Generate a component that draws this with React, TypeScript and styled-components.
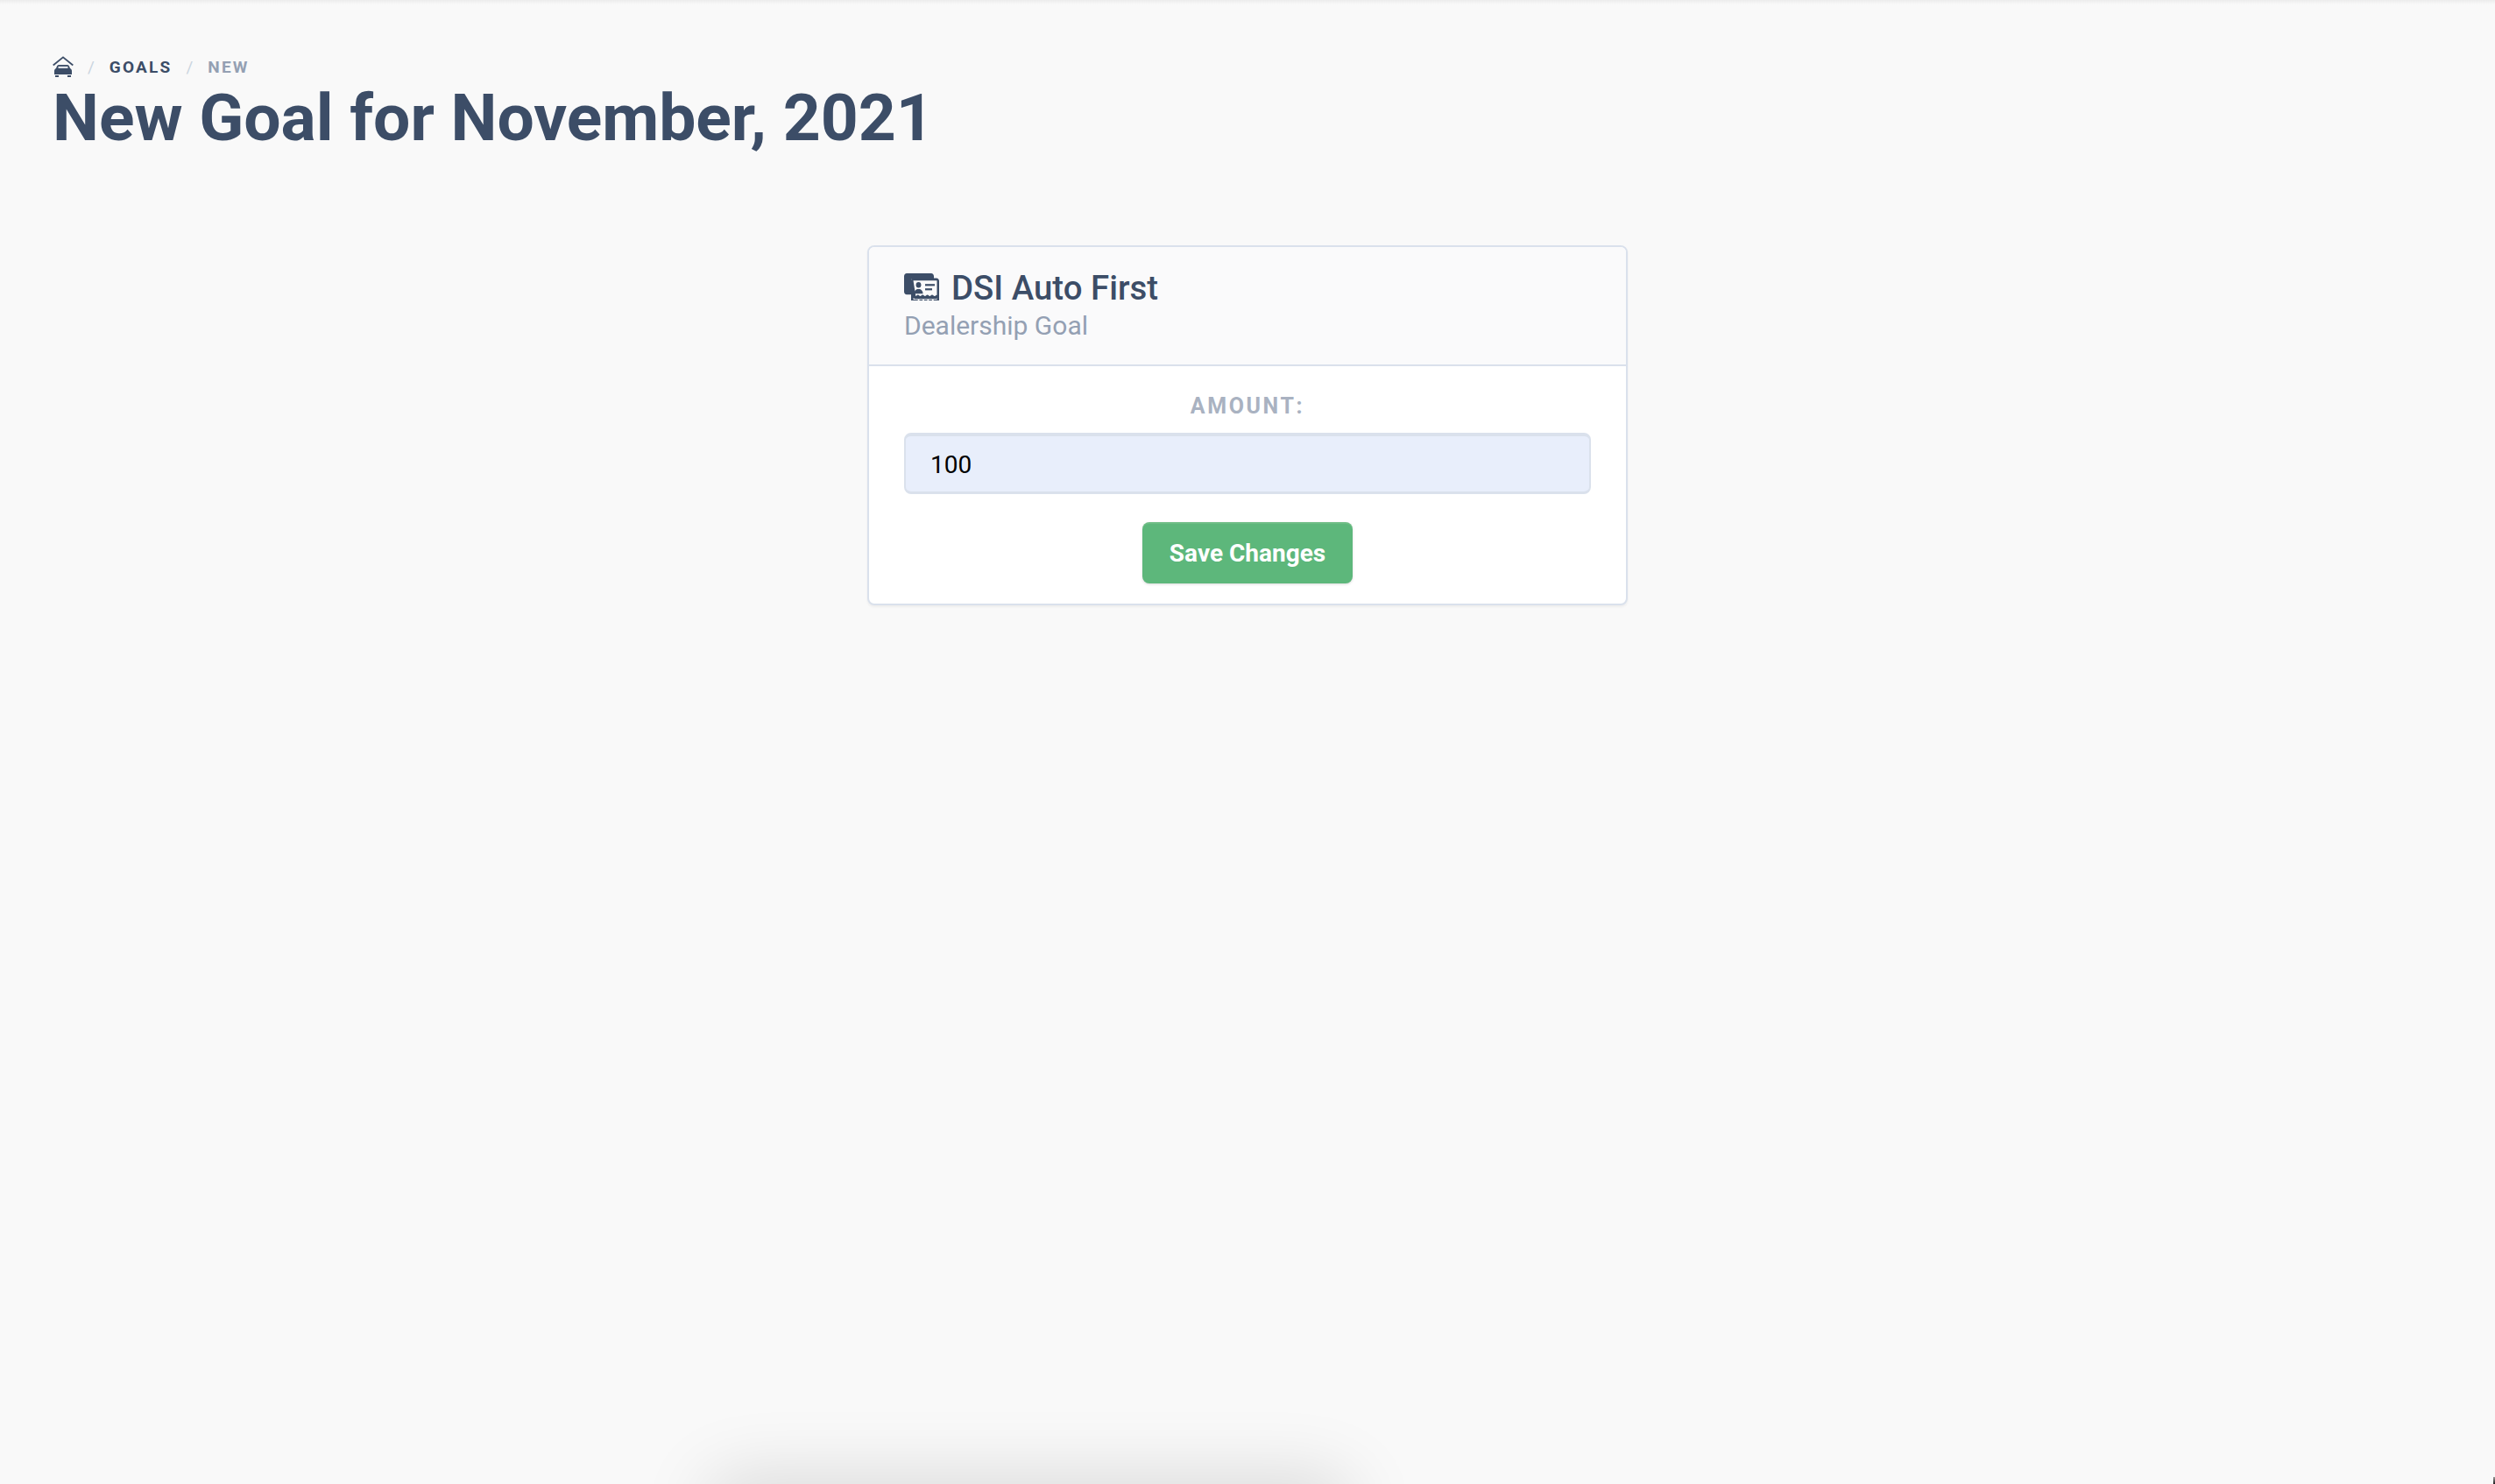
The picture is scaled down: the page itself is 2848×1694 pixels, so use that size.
import React from "react";
import styled, { createGlobalStyle } from "styled-components";

const Global = createGlobalStyle`
  html, body { margin: 0; padding: 0; height: 100%; background: #f9f9f9; }
  body { font-family: Roboto, "Liberation Sans", sans-serif; overflow: hidden; }
  * { box-sizing: border-box; }
`;

const Page = styled.div`
  position: relative;
  width: 2848px;
  height: 1694px;
  background: #f9f9f9;
  overflow: hidden;
  display: flex;
  flex-direction: column;
  padding: 60px 60px 0;
  &::before {
    content: "";
    position: absolute;
    top: 0; left: 0; right: 0;
    height: 5px;
    background: linear-gradient(#ececec, #f9f9f9);
  }
`;

const Crumbs = styled.nav`
  display: flex;
  align-items: center;
  height: 32px;
  font-size: 19px;
  font-weight: 700;
  letter-spacing: 2.2px;
  color: #3c4d67;
`;

const Sep = styled.span`
  color: #cbd5e0;
  font-weight: 400;
  margin: 0 17px 0 16px;
  letter-spacing: 0;
`;

const Current = styled.span`
  color: #94a0b3;
`;

const Title = styled.h1`
  margin: 0;
  font-size: 75px;
  line-height: 84px;
  font-weight: 700;
  color: #3c4d67;
`;

const Card = styled.section`
  align-self: center;
  width: 868px;
  margin-top: 104px;
  border: 2px solid #dae1ec;
  border-radius: 8px;
  background: #fff;
  box-shadow: 0 2px 3px rgba(0,0,0,.05);
  overflow: hidden;
`;

const CardHead = styled.header`
  height: 136px;
  padding: 22px 40px 0;
  background: #fafafb;
  border-bottom: 2px solid #dae1ec;
`;

const CardTitle = styled.h2`
  margin: 0;
  display: flex;
  align-items: center;
  gap: 14px;
  font-size: 38.400px;
  line-height: 50px;
  font-weight: 500;
  color: #3c4d67;
`;

const CardSub = styled.div`
  font-size: 30px;
  line-height: 36px;
  color: #94a0b3;
`;

const CardBody = styled.form`
  display: flex;
  flex-direction: column;
  align-items: center;
  padding: 30px 40px 23px;
`;

const Label = styled.label`
  font-size: 25px;
  line-height: 32px;
  font-weight: 700;
  letter-spacing: 2.6px;
  color: #a9b2c1;
  margin-bottom: 14px;
`;

const Input = styled.input`
  width: 100%;
  height: 70px;
  border-style: solid;
  border-color: #dae1ec;
  border-width: 4px 2px 3px;
  border-radius: 8px;
  background: #e8eefb;
  padding: 1px 28px 0;
  font-family: Roboto, sans-serif;
  font-size: 28px;
  color: #000;
  outline: none;
`;

const Save = styled.button`
  margin-top: 32px;
  width: 240px;
  height: 70px;
  border: 0;
  border-top: 2px solid #6fbd85;
  border-radius: 8px;
  background: #5db77b;
  color: #fff;
  padding: 0 0 2px;
  font-family: Roboto, sans-serif;
  font-size: 28px;
  font-weight: 700;
  box-shadow: 0 1px 3px rgba(0,0,0,.15);
`;

const BottomShadow = styled.div`
  position: absolute;
  left: 824px;
  top: 1704px;
  width: 702px;
  height: 40px;
  box-shadow: 0 0 80px 20px rgba(0,0,0,.13);
  border-radius: 30px;
`;

const CornerMark = styled.div`
  position: absolute;
  right: 0;
  bottom: 0;
  width: 2px;
  height: 8px;
  background: linear-gradient(#999, #222);
`;

const TitleIcon = styled.svg`
  margin-top: -3px;
  flex: none;
`;

const HomeIcon = () => (
  <svg width="24" height="24" viewBox="0 0 24 24">
    <path d="M.7 10.500 12 1.300l11.300 9.200" fill="none" stroke="#3c4d67" strokeWidth="1.800" />
    <path d="M5 11.500C5.500 10.500 6.300 10 7.500 10h9c1.200 0 2 .5 2.500 1.500l1 2.500c1.200.7 2 1.700 2 3v4H2v-4c0-1.300.8-2.300 2-3z" fill="#3c4d67" />
    <rect x="6.500" y="11.800" width="11" height="2.200" fill="#dfe3e9" />
    <rect x="3" y="22" width="4" height="2" fill="#3c4d67" />
    <rect x="17" y="22" width="4" height="2" fill="#3c4d67" />
  </svg>
);

const CardIcon = () => (
  <TitleIcon width="40" height="31" viewBox="0 0 40 28" preserveAspectRatio="none">
    <path d="M3 0h28c1.700 0 3 1.300 3 3v3H8v16H3c-1.700 0-3-1.300-3-3V3C0 1.300 1.300 0 3 0z" fill="#3c4d67" />
    <path d="M8 7.500C8 6 9 5 10.500 5H37c1.700 0 3 1.300 3 3v20h-6c-.8-1.400-1.600-1.400-2.400 0h-3c-.8-1.400-1.600-1.400-2.400 0h-3c-.8-1.400-1.600-1.400-2.400 0h-3c-.8-1.400-1.600-1.400-2.400 0H8z" fill="#3c4d67" />
    <path d="M10.500 7.500h27v14.800c-1.300-.2-1.800 1.200-2.800 1.200s-1.500-1.400-2.700-1.400-1.700 1.400-2.700 1.400-1.500-1.400-2.700-1.400-1.700 1.400-2.700 1.400-1.500-1.400-2.700-1.400-1.700 1.400-2.700 1.400-1.500-1.400-2.700-1.400-1.700 1.400-2.500 1.400z" fill="#fafafb" />
    <path d="M10.500 25.500c1 0 1.500 1 2.500 1h23c1 0 1.500-1 1.500-1V27h-27z" fill="#fafafb" />
    <circle cx="16.500" cy="12" r="2.900" fill="#3c4d67" />
    <path d="M11.500 21c0-3 2-4.800 5-4.800s5 1.800 5 4.800z" fill="#3c4d67" />
    <rect x="24" y="11" width="11" height="2" fill="#3c4d67" />
    <rect x="24" y="15.500" width="8" height="2" fill="#3c4d67" />
  </TitleIcon>
);

export default function App() {
  return (
    <Page>
      <Global />
      <Crumbs>
        <HomeIcon />
        <Sep>/</Sep>
        <span>GOALS</span>
        <Sep>/</Sep>
        <Current>NEW</Current>
      </Crumbs>
      <Title>New Goal for November, 2021</Title>
      <Card>
        <CardHead>
          <CardTitle><CardIcon />DSI Auto First</CardTitle>
          <CardSub>Dealership Goal</CardSub>
        </CardHead>
        <CardBody>
          <Label>AMOUNT:</Label>
          <Input defaultValue="100" />
          <Save type="button">Save Changes</Save>
        </CardBody>
      </Card>
      <BottomShadow />
      <CornerMark />
    </Page>
  );
}
